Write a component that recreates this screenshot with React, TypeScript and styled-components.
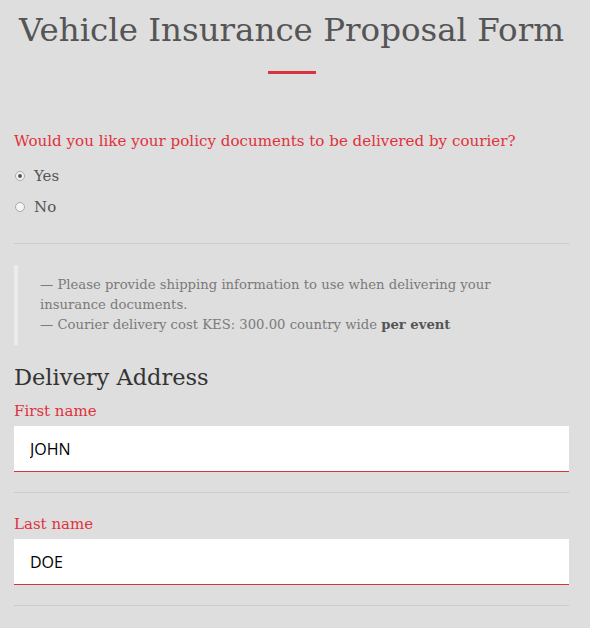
import React from "react";
import styled, { createGlobalStyle } from "styled-components";

const Global = createGlobalStyle`
  html, body { margin: 0; padding: 0; background: #dedede; }
  body { font-family: "DejaVu Serif", serif; }
`;

const Page = styled.div`
  width: 555px;
  padding: 0 21px 0 14px;
`;

const Title = styled.h1`
  margin: 0;
  padding-top: 8px;
  text-align: center;
  font-weight: 400;
  font-size: 32.5px;
  line-height: 44px;
  color: #555555;
`;

const Accent = styled.div`
  width: 48px;
  height: 3px;
  background: #d9333c;
  margin: 19px auto 0;
`;

const Question = styled.p`
  margin: 55px 0 0;
  font-size: 15.1px;
  line-height: 24px;
  color: #e0323c;
`;

const RadioGroup = styled.div`
  display: flex;
  flex-direction: column;
  gap: 7px;
  margin-top: 11px;
`;

const RadioRow = styled.label`
  display: flex;
  align-items: center;
  gap: 9px;
  font-size: 15px;
  line-height: 24px;
  color: #555;
`;

const RadioDot = styled.span<{ $checked?: boolean }>`
  width: 10px;
  height: 10px;
  border-radius: 50%;
  border: 1px solid #aaa;
  background: #f4f4f4;
  box-sizing: border-box;
  display: flex;
  align-items: center;
  justify-content: center;
  margin-left: 1px;
  &::after {
    content: "";
    width: 4px;
    height: 4px;
    border-radius: 50%;
    background: ${(p) => (p.$checked ? "#555" : "transparent")};
  }
`;

const Rule = styled.hr`
  border: 0;
  border-top: 1px solid #cbcbcb;
  margin: 0;
`;

const FirstRule = styled(Rule)`
  margin-top: 24px;
`;

const Quote = styled.blockquote`
  margin: 21px 0 0;
  border-left: 4px solid #ebebeb;
  padding: 10px 20px 10px 22px;
  font-size: 13.2px;
  line-height: 20px;
  color: #7a7a7a;
  b { color: #555; font-weight: 600; }
`;

const SectionTitle = styled.h2`
  margin: 16px 0 0;
  font-weight: 400;
  font-size: 22.5px;
  line-height: 32px;
  color: #333;
`;

const Field = styled.div`
  display: flex;
  flex-direction: column;
`;

const FirstField = styled(Field)`
  margin-top: 7px;
`;

const SpacedField = styled(Field)`
  margin-top: 20px;
`;

const FieldLabel = styled.label`
  font-size: 15px;
  line-height: 22px;
  color: #e0323c;
`;

const Input = styled.input`
  box-sizing: border-box;
  height: 46px;
  margin-top: 4px;
  border: 0;
  border-bottom: 1px solid #d9333c;
  background: #fff;
  padding: 0 16px;
  font-family: "Open Sans", sans-serif;
  font-size: 16px;
  color: #000;
  outline: none;
`;

const FieldRule = styled(Rule)`
  margin-top: 20px;
`;

export default function App() {
  return (
    <>
      <Global />
      <Page>
        <Title>Vehicle Insurance Proposal Form</Title>
        <Accent />
        <Question>Would you like your policy documents to be delivered by courier?</Question>
        <RadioGroup>
          <RadioRow>
            <RadioDot $checked /> Yes
          </RadioRow>
          <RadioRow>
            <RadioDot /> No
          </RadioRow>
        </RadioGroup>
        <FirstRule />
        <Quote>
          — Please provide shipping information to use when delivering your insurance documents.
          <br />— Courier delivery cost KES: 300.00 country wide <b>per event</b>
        </Quote>
        <SectionTitle>Delivery Address</SectionTitle>
        <FirstField>
          <FieldLabel>First name</FieldLabel>
          <Input defaultValue="JOHN" />
        </FirstField>
        <FieldRule />
        <SpacedField>
          <FieldLabel>Last name</FieldLabel>
          <Input defaultValue="DOE" />
        </SpacedField>
        <FieldRule />
      </Page>
    </>
  );
}
